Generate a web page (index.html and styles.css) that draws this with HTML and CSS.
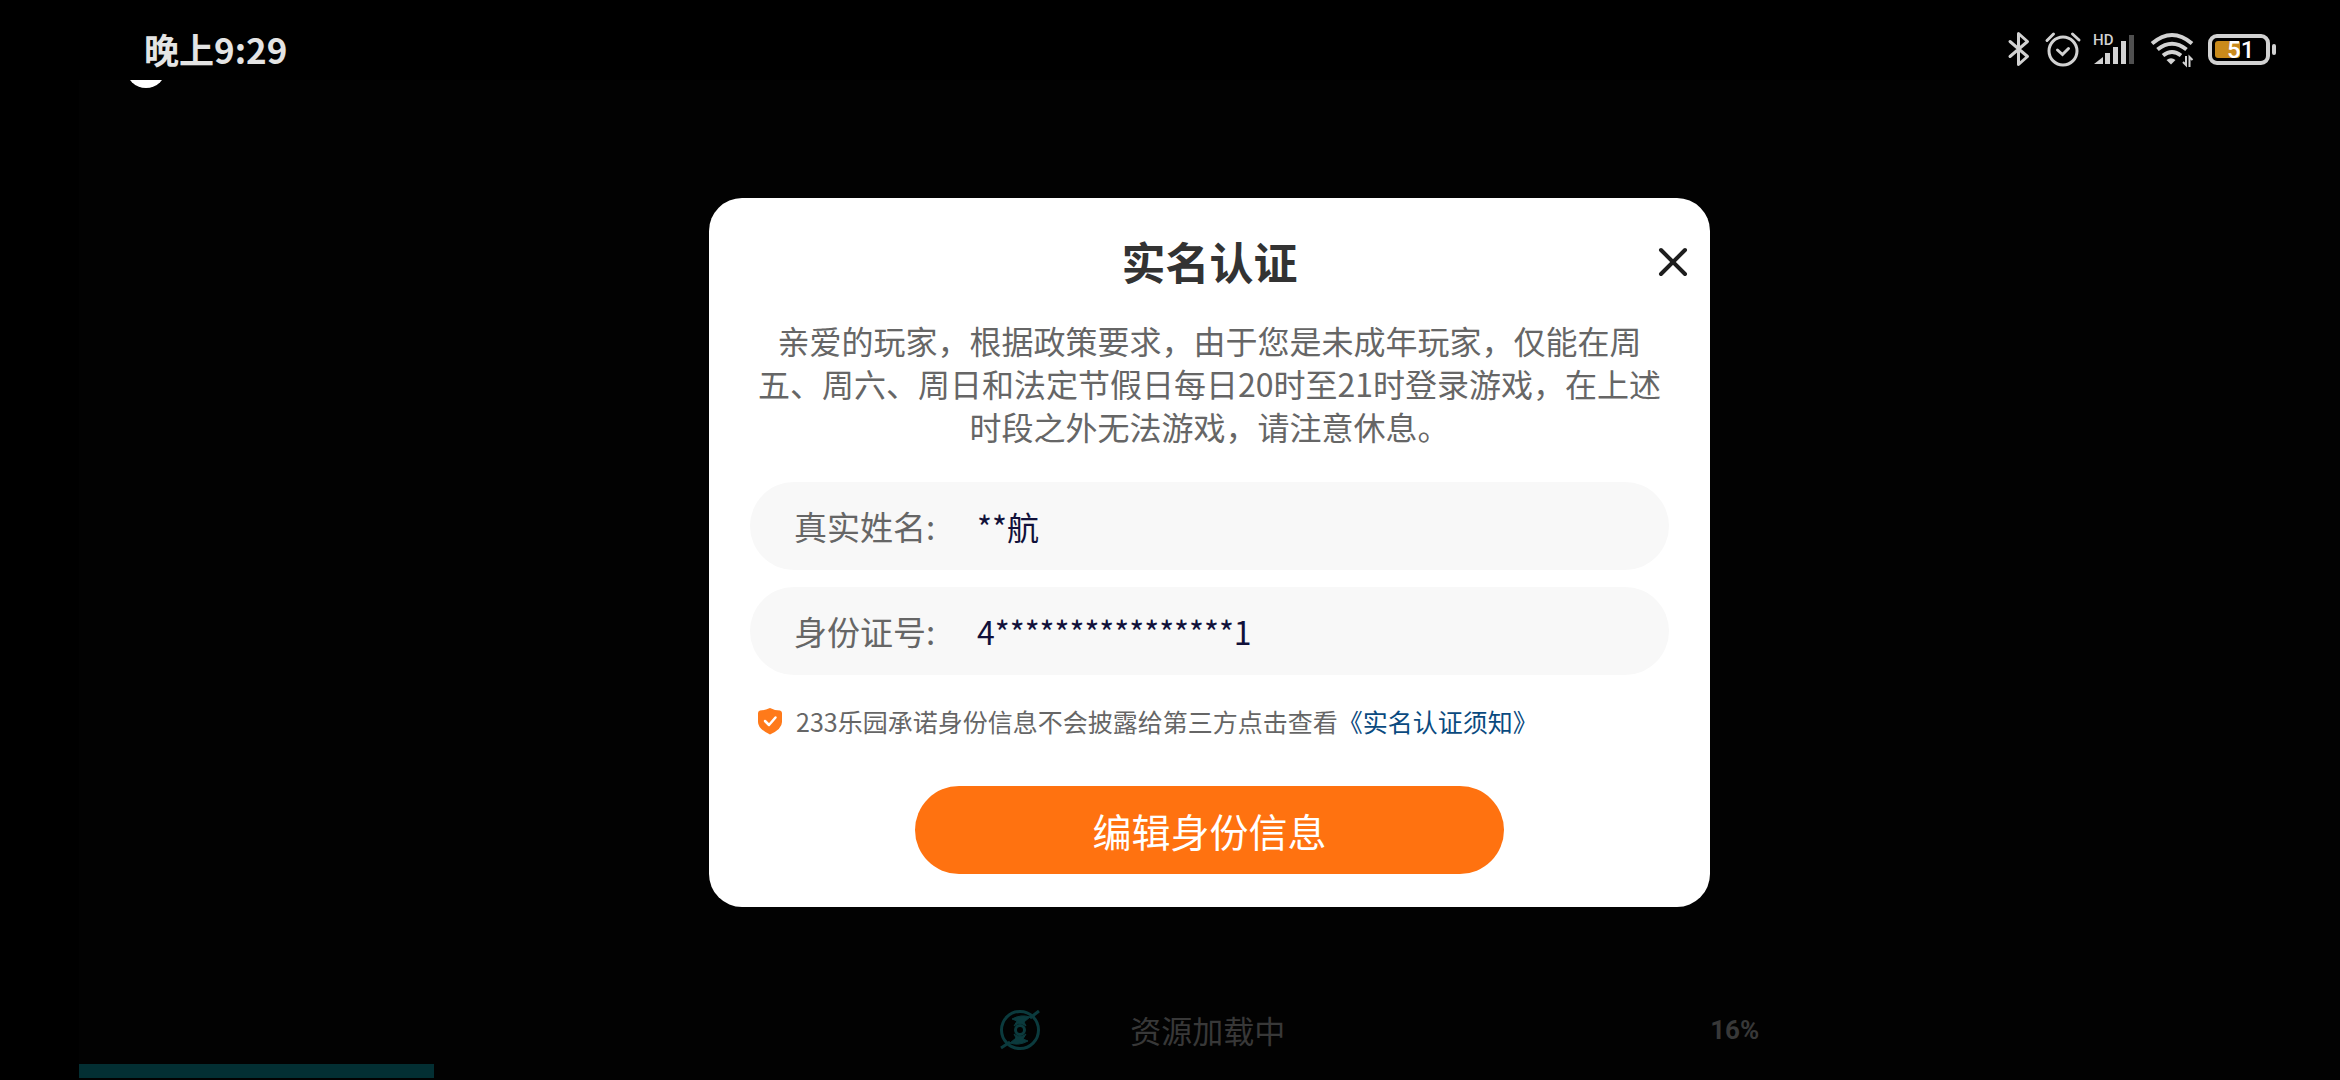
FILE: index.html
```html
<!DOCTYPE html>
<html lang="zh-CN">
<head>
<meta charset="utf-8">
<meta name="viewport" content="width=device-width, initial-scale=1">
<title>实名认证</title>
<link rel="stylesheet" href="styles.css">
</head>
<body>
<header class="status">
  <time class="status-time">晚上9:29</time>
  <div class="status-icons">
    <svg width="24" height="36" viewBox="0 0 24 36" fill="none" stroke="#d2d2d2" stroke-width="3" stroke-linejoin="round" stroke-linecap="round"><path d="M2 10.500 19.500 25.500 10.500 33.500V2.500L19.500 10.500 2 25.500"/></svg>
    <svg width="36" height="36" viewBox="0 0 36 36" fill="none" stroke="#d2d2d2" stroke-width="3" stroke-linecap="round"><circle cx="19" cy="20" r="14"/><path d="M13.500 19 18.500 23.500 24.500 17.500M3 9.500 9.500 3M28.500 3 35 9" /></svg>
    <svg width="46" height="36" viewBox="0 0 46 36" fill="#d2d2d2"><text class="hd" x="1" y="14">HD</text><path d="M2 33 11 26V33Z"/><rect x="13" y="22" width="5" height="11"/><rect x="21" y="16" width="5" height="17"/><rect x="29" y="10" width="5" height="23"/><rect x="37" y="4" width="5" height="29" fill="#505050"/></svg>
    <svg width="46" height="36" viewBox="0 0 46 36" fill="none" stroke="#d2d2d2" stroke-width="4"><path d="M2 12.500Q22 -4.500 42 12.500M7.500 18.500Q22 7 36.500 18.500M13 24.500Q22 17.500 31 24.500"/><path d="M16.500 29Q21 25.500 25.500 29L21 33.500Z" fill="#d2d2d2" stroke="none"/><path d="M36 25V34L33 31M39.500 36V26L42.500 29" stroke-width="2"/></svg>
    <svg width="68" height="36" viewBox="0 0 68 36"><rect x="2" y="5" width="58" height="27" rx="7" fill="none" stroke="#d2d2d2" stroke-width="4"/><rect x="7" y="10" width="25" height="17" rx="3" fill="#c98a1b"/><rect x="64" y="13" width="4" height="11" rx="2" fill="#d2d2d2"/><text class="charge" x="19" y="27">51</text></svg>
  </div>
</header>
<main class="game">
  <span class="bubble"></span>
  <section class="dialog" role="dialog" aria-labelledby="dialog-title">
    <button class="close" type="button" aria-label="关闭"><svg width="30" height="30" viewBox="0 0 30 30" fill="none" stroke="#1e1e1e" stroke-width="4" stroke-linecap="round"><path d="M3 3 27 27M27 3 3 27"/></svg></button>
    <h1 class="title" id="dialog-title">实名认证</h1>
    <p class="notice">亲爱的玩家，根据政策要求，由于您是未成年玩家，仅能在周五、周六、周日和法定节假日每日20时至21时登录游戏，在上述时段之外无法游戏，请注意休息。</p>
    <form class="fields">
      <div class="field"><label for="name">真实姓名:</label><input id="name" type="text" value="**航" readonly></div>
      <div class="field"><label for="idno">身份证号:</label><input id="idno" type="text" value="4****************1" readonly></div>
    </form>
    <p class="promise"><svg width="26" height="28" viewBox="0 0 26 28"><path d="M13 1Q18 3.500 23 3.500Q25 4 25 6V15Q25 22 13 27.500Q1 22 1 15V6Q1 4 3 3.500Q8 3.500 13 1Z" fill="#ff7a1a"/><path d="M8 14 12 18 18.500 10.500" fill="none" stroke="#fff" stroke-width="2.500" stroke-linecap="round" stroke-linejoin="round"/></svg><span>233乐园承诺身份信息不会披露给第三方点击查看<a href="#notice">《实名认证须知》</a></span></p>
    <button class="edit" type="button">编辑身份信息</button>
  </section>
  <footer class="loading">
    <div class="loading-row">
      <svg width="42" height="42" viewBox="0 0 42 42" fill="none" stroke="#0b3a3d" stroke-width="3"><circle cx="21" cy="21" r="18.500"/><path d="M2 39 11 33M31 9 40 2"/><path d="M13 10Q22 5 31 8L25 13 27 17Q21 12 15 17L18 12ZM29 32Q20 37 11 34L17 29 15 25Q21 30 27 25L24 30Z" fill="#0b3a3d" stroke-width="1"/><circle cx="21" cy="21" r="4.500"/></svg>
      <span class="loading-text">资源加载中</span>
      <span class="loading-percent">16%</span>
    </div>
    <div class="track"><div class="bar" style="width:15.7%"></div></div>
  </footer>
</main>
</body>
</html>
```
FILE: styles.css
```css
* { box-sizing: border-box; }
body {
  margin: 0;
  min-height: 100vh;
  display: flex;
  flex-direction: column;
  background: #000;
  color: #666;
  font-family: "Noto Sans CJK SC", sans-serif;
}
svg { display: block; flex: none; overflow: visible; }
h1, p { margin: 0; }

.status {
  display: flex;
  justify-content: space-between;
  align-items: center;
  height: 80px;
  padding: 18px 64px 0 144px;
}
.status-time { color: #e4e4e4; font-size: 35px; font-weight: 700; line-height: 62px; }
.status-icons { display: flex; gap: 12px; }
.hd { font: 500 15px Roboto, sans-serif; }
.charge { font: 500 24px Roboto, sans-serif; fill: #fff; }

.game {
  position: relative;
  flex: 1;
  display: flex;
  flex-direction: column;
  align-items: center;
  margin-left: 79px;
  padding-top: 118px;
  background: #020202;
  overflow: hidden;
}
.bubble {
  position: absolute;
  left: 47px;
  top: -32px;
  width: 40px;
  height: 40px;
  border-radius: 50%;
  background: #fff;
}

.dialog {
  position: relative;
  display: flex;
  flex-direction: column;
  width: 100%;
  max-width: 1001px;
  padding: 33px 41px;
  border-radius: 33px;
  background: #fff;
}
.close {
  position: absolute;
  top: 41px;
  right: 14px;
  padding: 8px;
  border: 0;
  background: none;
}
.title { color: #333; font-size: 44px; font-weight: 700; line-height: 60px; text-align: center; }
.notice { margin-top: 28px; font-size: 32px; line-height: 43px; text-align: center; }
.fields { display: flex; flex-direction: column; gap: 17px; margin-top: 34px; }
.field {
  display: flex;
  align-items: center;
  height: 88px;
  padding: 0 44px;
  border-radius: 44px;
  background: #f8f8f8;
  font-size: 33px;
}
.field label { width: 183px; }
.field input {
  flex: 1;
  min-width: 0;
  padding: 0;
  border: 0;
  outline: 0;
  background: none;
  color: #11113a;
  font: inherit;
  font-size: 32px;
}
.promise {
  display: flex;
  align-items: center;
  gap: 13px;
  margin-top: 28px;
  padding-left: 7px;
  font-size: 25px;
  line-height: 36px;
}
.promise a { color: #0a4a80; text-decoration: none; }
.edit {
  align-self: center;
  width: 64%;
  height: 88px;
  margin-top: 47px;
  border: 0;
  border-radius: 44px;
  background: #ff7210;
  color: #fff;
  font: 400 39px "Noto Sans CJK SC", sans-serif;
}

.loading { width: 100%; margin-top: auto; padding-bottom: 2px; }
.loading-row {
  display: flex;
  align-items: center;
  width: 760px;
  margin: 0 0 13px 40.7%;
}
.loading-text { margin-left: 89px; color: #383838; font-size: 31px; line-height: 38px; }
.loading-percent { margin-left: auto; color: #383838; font: 700 26px Roboto, sans-serif; }
.bar { height: 14px; background: #032f33; }
```
